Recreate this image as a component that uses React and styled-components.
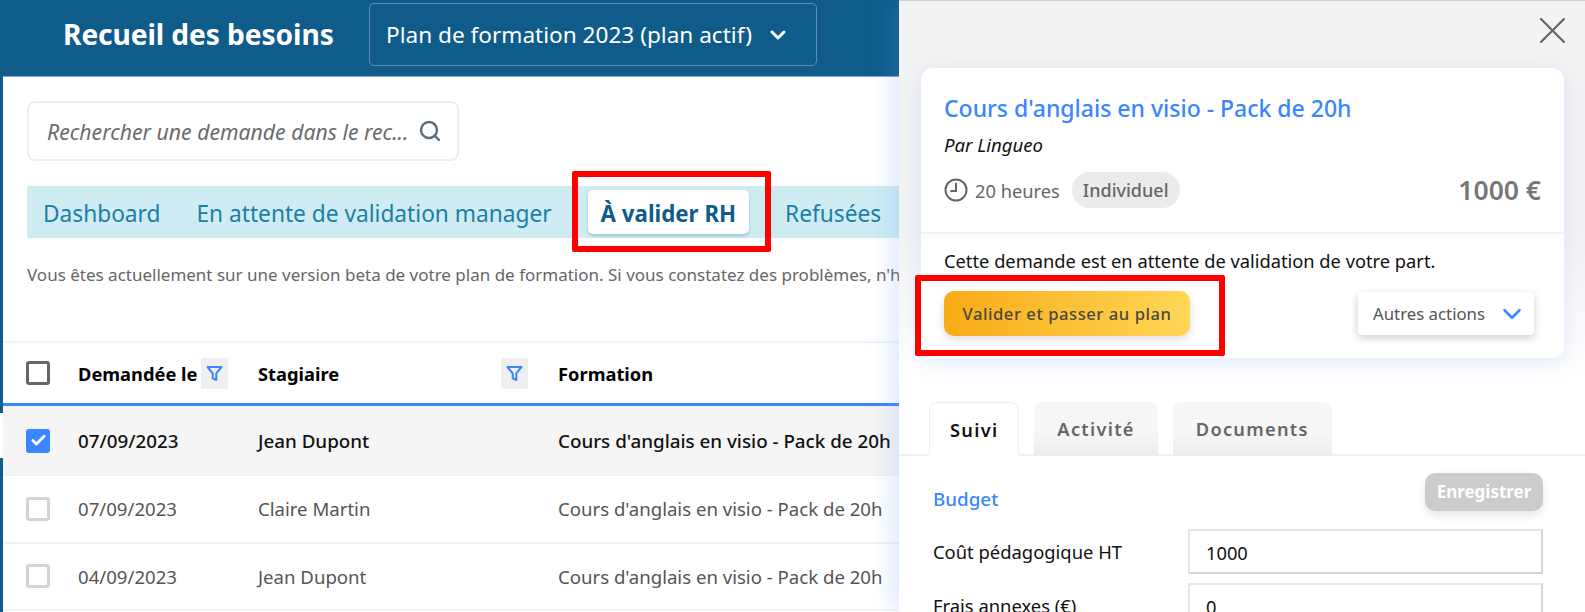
import React from 'react'
import styled, { createGlobalStyle } from 'styled-components'
import { Search, ChevronDown, Check } from 'lucide-react'

const GlobalStyle = createGlobalStyle`
html,body{
  margin:0;
  padding:0;
  background:#fff;
}
*{
  box-sizing:border-box;
}
body{
  font-family:"Noto Sans","Open Sans",sans-serif;
  color:#111;
}
`

const rows = [
  { date: '07/09/2023', name: 'Jean Dupont', course: "Cours d'anglais en visio - Pack de 20h", selected: true },
  { date: '07/09/2023', name: 'Claire Martin', course: "Cours d'anglais en visio - Pack de 20h" },
  { date: '04/09/2023', name: 'Jean Dupont', course: "Cours d'anglais en visio - Pack de 20h" },
]

const FunnelIcon = () => (
  <svg width="17" height="17" viewBox="0 0 17 17" fill="none" stroke="#3a86ff" strokeWidth="2" strokeLinejoin="round">
    <path d="M1.5 2h14l-5.2 6.4V15l-3.6-1.6V8.4z" />
  </svg>
)

const ClockIcon = () => (
  <svg width="24" height="24" viewBox="0 0 24 24" fill="none" stroke="#666" strokeWidth="2" strokeLinecap="round">
    <circle cx="12" cy="12" r="10.5" />
    <path d="M12 5.5V13H7" />
  </svg>
)

const CloseIcon = () => (
  <svg width="25" height="25" viewBox="0 0 25 25" fill="none" stroke="#666" strokeWidth="2.2" strokeLinecap="round">
    <path d="M1 1l23 23M24 1L1 24" />
  </svg>
)

const App = () => {
  return (
    <Page>
      <GlobalStyle />
      <Rail />
      <Main>
        <Header>
          <Title>Recueil des besoins</Title>
          <PlanSelect>
            <span>Plan de formation 2023 (plan actif)</span>
            <ChevronDown size={24} strokeWidth={3} color="#fff" />
          </PlanSelect>
        </Header>
        <Content>
          <SearchBox>
            <SearchText>Rechercher une demande dans le rec...</SearchText>
            <Search size={24} color="#5c6b7a" strokeWidth={2.4} />
          </SearchBox>
          <TabBar>
            <TabItem>Dashboard</TabItem>
            <TabItem>En attente de validation manager</TabItem>
            <TabItem $active>À valider RH</TabItem>
            <TabItem>Refusées</TabItem>
          </TabBar>
          <BetaNote>Vous êtes actuellement sur une version beta de votre plan de formation. Si vous constatez des problèmes, n'hésitez pas à nous le signaler.</BetaNote>
        </Content>
        <Table>
          <HeadRow>
            <Box $strong />
            <HeadCell $w={180}>
              <span>Demandée le</span>
              <FilterButton><FunnelIcon /></FilterButton>
            </HeadCell>
            <HeadCell $w={300}>
              <span>Stagiaire</span>
              <FilterButton><FunnelIcon /></FilterButton>
            </HeadCell>
            <HeadCell>
              <span>Formation</span>
            </HeadCell>
          </HeadRow>
          {rows.map((row, i) => (
            <Row key={i} $selected={row.selected}>
              <Box $checked={row.selected}>
                {row.selected && <Check size={17} strokeWidth={4} color="#fff" />}
              </Box>
              <Cell $w={180}>{row.date}</Cell>
              <Cell $w={300}>{row.name}</Cell>
              <Cell>{row.course}</Cell>
            </Row>
          ))}
        </Table>
      </Main>
      <TabHighlight />
      <Drawer>
        <DrawerTop>
          <CloseButton><CloseIcon /></CloseButton>
          <Card>
            <CardHead>
              <CourseTitle>Cours d'anglais en visio - Pack de 20h</CourseTitle>
              <Provider>Par Lingueo</Provider>
              <MetaRow>
                <ClockIcon />
                <Hours>20 heures</Hours>
                <Chip>Individuel</Chip>
                <Price>1000 €</Price>
              </MetaRow>
            </CardHead>
            <CardFoot>
              <Notice>Cette demande est en attente de validation de votre part.</Notice>
              <Actions>
                <ValidateButton>Valider et passer au plan</ValidateButton>
                <MoreButton>
                  <span>Autres actions</span>
                  <ChevronDown size={30} strokeWidth={2} color="#3a86ff" />
                </MoreButton>
              </Actions>
            </CardFoot>
          </Card>
          <ButtonHighlight />
        </DrawerTop>
        <DrawerTabs>
          <DrawerTab $active>Suivi</DrawerTab>
          <DrawerTab>Activité</DrawerTab>
          <DrawerTab>Documents</DrawerTab>
        </DrawerTabs>
        <FormArea>
          <FormHead>
            <SectionTitle>Budget</SectionTitle>
            <SaveButton>Enregistrer</SaveButton>
          </FormHead>
          <Field>
            <label>Coût pédagogique HT</label>
            <Input>1000</Input>
          </Field>
          <Field>
            <label>Frais annexes (€)</label>
            <Input>0</Input>
          </Field>
        </FormArea>
      </Drawer>
    </Page>
  )
}

const Page = styled.div`
position:relative;
display:flex;
width:1585px;
height:612px;
overflow:hidden;
background:#fff;
`

const Rail = styled.div`
flex:0 0 3px;
background:linear-gradient(#0f5c8a 0 413px,#fff 413px 458px,#0f5c8a 458px);
`

const Main = styled.div`
flex:1;
min-width:0;
overflow:hidden;
`

const Header = styled.header`
display:flex;
align-items:center;
height:77px;
padding:0 0 7px 60px;
background:#0f5c8a;
border-bottom:1px solid #7fa8c4;
`

const Title = styled.h1`
margin:-2px 0 0;
width:306px;
font-size:28.2px;
font-weight:700;
letter-spacing:-0.1px;
color:#fff;
white-space:nowrap;
`

const PlanSelect = styled.div`
display:flex;
align-items:center;
justify-content:space-between;
width:448px;
height:63px;
padding:0 26px 0 16px;
border:1px solid #5f8fb0;
border-radius:5px;
font-size:22.6px;
color:#fff;
white-space:nowrap;
`

const Content = styled.div`
padding:24px 0 0 24px;
`

const SearchBox = styled.div`
display:flex;
align-items:center;
justify-content:space-between;
width:432px;
height:60px;
padding:0 15px 0 18px;
background:#fff;
border:2px solid #efefef;
border-radius:8px;
`

const SearchText = styled.span`
font-size:21.2px;
font-style:italic;
color:#6b6b6b;
white-space:nowrap;
`

const TabBar = styled.div`
display:flex;
align-items:center;
gap:16px;
width:1000px;
height:52px;
margin-top:25px;
padding:0 6px;
background:#cfecf3;
border-radius:3px;
`

const TabItem = styled.div`
padding:0 ${p => p.$active ? '13px' : '10px'};
height:44px;
margin:0 ${p => p.$active ? '10px' : '0'};
line-height:47px;
font-size:${p => p.$active ? '22.3px' : '22.7px'};
font-weight:${p => p.$active ? 700 : 400};
color:${p => p.$active ? '#0f5c8a' : '#1b7fa8'};
background:${p => p.$active ? '#fff' : 'transparent'};
border-radius:5px;
box-shadow:${p => p.$active ? '0 2px 3px rgba(60,130,170,.35)' : 'none'};
white-space:nowrap;
`

const BetaNote = styled.p`
margin:25px 0 0;
font-size:17px;
line-height:24px;
color:#666;
white-space:nowrap;
`

const Table = styled.div`
margin-top:54px;
border-top:2px solid #eef5fb;
`

const HeadRow = styled.div`
display:flex;
align-items:center;
height:63px;
padding-left:23px;
border-bottom:3px solid #3a86ff;
`

const HeadCell = styled.div`
display:flex;
align-items:center;
justify-content:space-between;
width:${p => p.$w ? p.$w + 'px' : 'auto'};
padding:0 2px 0 28px;
font-size:18.3px;
font-weight:700;
color:#000;
`

const FilterButton = styled.div`
display:flex;
align-items:center;
justify-content:center;
width:27px;
height:31px;
background:#efefef;
border-radius:2px;
`

const Row = styled.div`
display:flex;
align-items:center;
height:${p => p.$selected ? '70px' : '67.5px'};
padding:${p => p.$selected ? '1px' : '0'} 0 0 23px;
background:${p => p.$selected ? '#f5f5f5' : '#fff'};
border-bottom:2px solid #f2f2f2;
font-size:${p => p.$selected ? '18.8px' : '18.6px'};
font-weight:${p => p.$selected ? 500 : 400};
color:${p => p.$selected ? '#111' : '#555'};
`

const Cell = styled.div`
width:${p => p.$w ? p.$w + 'px' : 'auto'};
padding-left:28px;
white-space:nowrap;
`

const Box = styled.div`
display:flex;
flex:none;
align-items:center;
justify-content:center;
width:24px;
height:24px;
background:${p => p.$checked ? '#3a86ff' : '#fff'};
border:${p => p.$checked ? 'none' : p.$strong ? '3px solid #666' : '3px solid #d4d4d4'};
border-radius:3px;
`

const TabHighlight = styled.div`
position:absolute;
left:572px;
top:171px;
width:199px;
height:81px;
border:6px solid #f00;
border-radius:2px;
`

const Drawer = styled.aside`
position:absolute;
top:0;
right:0;
bottom:0;
width:686px;
overflow:hidden;
background:#fff;
box-shadow:-6px 0 24px rgba(90,150,255,.22);
`

const DrawerTop = styled.div`
position:relative;
height:402px;
padding:67px 21px 0 22px;
border-top:1px solid #ccc;
background:linear-gradient(#f3f3f3 0,#f3f3f3 230px,#fff 385px);
`

const CloseButton = styled.div`
position:absolute;
top:17px;
right:20px;
width:25px;
height:25px;
`

const Card = styled.div`
background:#fff;
border-radius:12px;
box-shadow:0 4px 22px rgba(90,140,255,.16);
`

const CardHead = styled.div`
padding:26px 23px 0;
height:166px;
border-bottom:2px solid #f3f3f3;
`

const CourseTitle = styled.div`
font-size:23px;
font-weight:500;
line-height:28px;
color:#3a86ff;
white-space:nowrap;
`

const Provider = styled.div`
margin-top:11px;
font-size:18.6px;
font-style:italic;
line-height:24px;
color:#111;
`

const MetaRow = styled.div`
display:flex;
align-items:center;
margin-top:15px;
`

const Hours = styled.span`
margin-left:7px;
font-size:18.3px;
color:#666;
`

const Chip = styled.span`
margin-left:12px;
padding:0 11px;
height:36px;
line-height:36px;
font-size:18px;
font-weight:500;
color:#666;
background:#ebebeb;
border-radius:18px;
`

const Price = styled.span`
margin-left:auto;
font-size:26.5px;
font-weight:600;
color:#777;
`

const CardFoot = styled.div`
padding:14px 30px 22px 23px;
`

const Notice = styled.div`
font-size:18.3px;
line-height:26px;
color:#111;
white-space:nowrap;
`

const Actions = styled.div`
display:flex;
align-items:center;
justify-content:space-between;
margin-top:17px;
`

const ValidateButton = styled.div`
width:246px;
height:45px;
line-height:45px;
text-align:center;
font-size:16.6px;
font-weight:500;
letter-spacing:0.55px;
color:#4a4a3a;
background:linear-gradient(90deg,#f9ab17,#ffd657);
border-radius:10px;
box-shadow:0 3px 8px rgba(0,0,0,.14);
`

const MoreButton = styled.div`
display:flex;
align-items:center;
justify-content:space-between;
width:176px;
height:43px;
padding:0 7px 0 15px;
font-size:16.8px;
color:#555;
background:#fff;
border-radius:4px;
box-shadow:0 3px 8px rgba(0,0,0,.2);
`

const ButtonHighlight = styled.div`
position:absolute;
left:16px;
top:274px;
width:310px;
height:81px;
border:6px solid #f00;
border-radius:2px;
`

const DrawerTabs = styled.div`
display:flex;
gap:15px;
height:54px;
padding-left:30px;
border-bottom:2px solid #f0f0f0;
`

const DrawerTab = styled.div`
padding:0 ${p => p.$active ? '20px' : '23px'};
height:54px;
line-height:55px;
font-size:18.2px;
font-weight:600;
letter-spacing:1.3px;
color:${p => p.$active ? '#111' : '#666'};
background:${p => p.$active ? '#fff' : 'linear-gradient(#f6f6f6 60%,#ececec)'};
border:${p => p.$active ? '1px solid #eee' : 'none'};
border-bottom:${p => p.$active ? '2px solid #fff' : 'none'};
border-radius:8px 8px 0 0;
`

const FormArea = styled.div`
padding:16px 42px 0 34px;
`

const FormHead = styled.div`
display:flex;
align-items:center;
justify-content:space-between;
height:40px;
margin-bottom:17px;
`

const SectionTitle = styled.div`
margin-top:13px;
font-size:18.8px;
font-weight:500;
color:#3a86ff;
`

const SaveButton = styled.div`
width:118px;
height:38px;
line-height:38px;
text-align:center;
font-size:17px;
font-weight:700;
color:#fff;
background:#ccc;
border-radius:10px;
box-shadow:0 4px 10px rgba(0,0,0,.1);
`

const Field = styled.div`
display:flex;
align-items:center;
justify-content:space-between;
margin-bottom:9px;
label{
  font-size:18.4px;
  color:#111;
}
`

const Input = styled.div`
width:355px;
height:45px;
padding:0 16px;
line-height:44px;
font-size:18.3px;
color:#111;
background:#fff;
border:2px solid #e6e6e6;
border-bottom-color:#d4d4d4;
border-right-color:#d4d4d4;
`

export default App
